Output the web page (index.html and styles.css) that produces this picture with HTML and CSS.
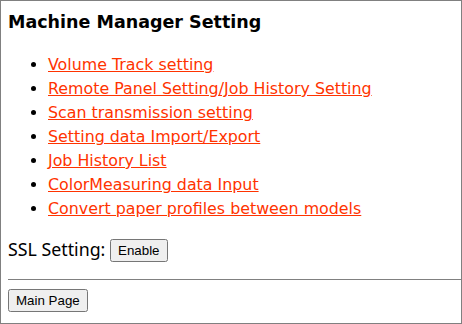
FILE: index.html
```html
<!DOCTYPE html>
<html lang="en">
<head>
    <meta charset="UTF-8">
    <title>Machine Manager Setting</title>
    <link rel="stylesheet" href="styles.css">
</head>
<body>
    <div class="frame">
        <h1>Machine Manager Setting</h1>

        <ul class="menu">
            <li><a href="#">Volume Track setting</a></li>
            <li><a href="#">Remote Panel Setting/Job History Setting</a></li>
            <li><a href="#">Scan transmission setting</a></li>
            <li><a href="#">Setting data Import/Export</a></li>
            <li><a href="#">Job History List</a></li>
            <li><a href="#">ColorMeasuring data Input</a></li>
            <li><a href="#">Convert paper profiles between models</a></li>
        </ul>

        <div class="ssl">
            SSL Setting: <button type="button">Enable</button>
        </div>

        <hr>

        <button type="button">Main Page</button>
    </div>
</body>
</html>
```

FILE: styles.css
```css
html, body {
    margin: 0;
    height: 100%;
}
body {
    font-family: "DejaVu Sans", Verdana, sans-serif;
    background: white;
}
.frame {
    box-sizing: border-box;
    height: 100%;
    border: 1px solid #808080;
    padding: 0 0 0 7px;
}
h1 {
    font-size: 17.5px;
    font-weight: bold;
    margin: 0;
    padding-top: 11px;
    line-height: 20px;
    color: #000;
}
.menu {
    margin: 21px 0 0 0;
    padding-left: 40px;
    font-size: 15.85px;
    line-height: 24px;
}
.menu a {
    color: #ff3300;
}
.ssl {
    margin-top: 17px;
    font-family: "Noto Sans", "Liberation Sans", sans-serif;
    font-size: 17.8px;
    line-height: 22px;
    color: #000;
}
button {
    font-family: "Liberation Sans", Arial, sans-serif;
    font-size: 13.33px;
    padding: 2px 6px;
    vertical-align: 1px;
}
hr {
    margin: 17px 0 9px 0;
    border: none;
    border-top: 1px solid #808080;
    height: 0;
}
```
